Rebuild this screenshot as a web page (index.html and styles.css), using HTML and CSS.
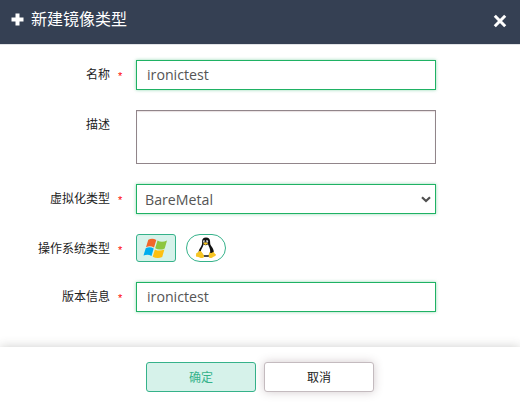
FILE: index.html
```
<!DOCTYPE html>
<html lang="zh-CN">
<head>
    <meta charset="UTF-8">
    <meta name="viewport" content="width=device-width, initial-scale=1.0">
    <title>新建镜像类型</title>
    <link rel="stylesheet" href="styles.css">
</head>
<body>
<div class="dialog">
    <div class="dialog-header">
        <svg class="icon-plus" width="13" height="13" viewBox="0 0 13 13"><path d="M4.5 0.5h4v4h4v4h-4v4h-4v-4h-4v-4h4z"/></svg>
        <h1>新建镜像类型</h1>
        <svg class="icon-close" width="14" height="14" viewBox="0 0 14 14"><path d="M1.800 1.800l10.400 10.400M12.200 1.800l-10.400 10.400"/></svg>
    </div>
    <form class="dialog-body">
        <div class="row">
            <label for="name">名称</label>
            <span class="required">*</span>
            <input id="name" class="field" type="text" value="ironictest">
        </div>
        <div class="row">
            <label for="desc">描述</label>
            <span class="required"></span>
            <textarea id="desc" class="field area"></textarea>
        </div>
        <div class="row">
            <label for="virt">虚拟化类型</label>
            <span class="required">*</span>
            <div class="select">
                <select id="virt" class="field">
                    <option>BareMetal</option>
                </select>
                <svg class="icon-arrow" width="10" height="7" viewBox="0 0 10 7"><path d="M1 1.200l4 3.800l4-3.800"/></svg>
            </div>
        </div>
        <div class="row os-row">
            <label>操作系统类型</label>
            <span class="required">*</span>
            <div class="os-list">
                <button type="button" class="os active" title="Windows">
                    <svg width="24" height="20" viewBox="0 0 24 20">
                        <path fill="#f1652a" d="M4.300 1.700C7 .2 9.500 .3 12.300 1.900L10 9.500C7.400 7.900 4.900 7.800 2 9.200z"/>
                        <path fill="#8cc63f" d="M13.500 2.600C16.300 4.200 19.500 4.200 23 2.600L20.700 10.400C17.500 12 14.300 12 11.200 10.300z"/>
                        <path fill="#00adef" d="M1.700 10.300C4.500 8.900 7.200 9 9.700 10.600L7.500 18C5 16.400 2.500 16.300 -.5 17.500z"/>
                        <path fill="#fdc010" d="M10.900 11.400C14 13 17 13 20.400 11.500L18.200 18.900C15.100 20.300 11.800 20.300 8.700 18.700z"/>
                    </svg>
                </button>
                <button type="button" class="os round" title="Linux">
                    <svg width="20" height="22" viewBox="0 0 20 22">
                        <path fill="#111" d="M10 .5C7.300 .5 6 2.300 6.100 4.600C6.200 7 6 8 4.800 9.900C3.400 12 1.900 14.500 2.900 17L7 19.800h6.500L17.600 16.800C18.400 14 17 11.300 15.400 9.300C14 7.500 14.200 6.500 14.100 4.500C14 2 12.700 .5 10 .5z"/>
                        <path fill="#fff" d="M7.600 7.300C9 8.500 10.400 8.400 12 7.300C12.700 9.500 14.600 12 14.200 15.300L12.600 18.300H7.500L4.700 15C4.700 12.500 7.200 10 7.600 7.300z"/>
                        <ellipse cx="8" cy="4.500" rx=".9" ry="1.200" fill="#fff"/>
                        <ellipse cx="11" cy="4.500" rx="1.100" ry="1.300" fill="#fff"/>
                        <circle cx="8.200" cy="4.700" r=".5"/>
                        <circle cx="10.800" cy="4.700" r=".5"/>
                        <path fill="#f6c524" d="M7.100 6.300L9.600 5.200l2.600 1.200L9.400 8z"/>
                        <path fill="#f6c524" d="M3.300 13.900C4.600 13.500 6 15.500 7.200 17.200C8.700 19 8.200 21 6.300 21.100C4.500 21.200 2.700 20 1 19.700C-.8 19.400 .2 18 .2 16.600C.4 15.200 2.600 15.700 3.300 13.900z"/>
                        <path fill="#f6c524" d="M13.300 15C14.300 16.500 16 16.300 17.200 14.700C18.500 15.300 18.200 16.500 19.900 17.600C20.600 18.700 17.900 19.200 16.400 20.500C15 21.500 13 21.300 12.700 19.700C12.400 18.500 13 17 13.300 15z"/>
                    </svg>
                </button>
            </div>
        </div>
        <div class="row">
            <label for="version">版本信息</label>
            <span class="required">*</span>
            <input id="version" class="field" type="text" value="ironictest">
        </div>
    </form>
    <div class="dialog-footer">
        <button type="button" class="btn confirm">确定</button>
        <button type="button" class="btn cancel">取消</button>
    </div>
</div>
</body>
</html>
```
FILE: styles.css
```
* {
    box-sizing: border-box;
}
body {
    margin: 0;
    background-color: #fff;
    color: #222;
    font-family: "Open Sans", "Noto Sans CJK SC", sans-serif;
    font-size: 12px;
    overflow: hidden;
}
.dialog {
    display: flex;
    flex-direction: column;
    height: 402px;
}
.dialog-header {
    display: flex;
    align-items: center;
    height: 44px;
    padding: 0 13px 5px 11px;
    background-color: #354053;
    box-shadow: 0 1px 0 #e1e3e6;
    color: #fff;
}
.dialog-header h1 {
    flex: 1;
    margin: 0 0 1px 7px;
    font-size: 16px;
    font-weight: 400;
    line-height: 24px;
}
.icon-plus {
    fill: #fff;
}
.icon-close {
    fill: none;
    stroke: #fff;
    stroke-width: 3;
    margin-top: 3px;
}
.dialog-body {
    flex: 1;
    display: flex;
    flex-direction: column;
    gap: 20px;
    padding-top: 16px;
}
.row {
    display: flex;
    align-items: flex-start;
}
.row label {
    width: 110px;
    text-align: right;
    line-height: 30px;
}
.required {
    width: 26px;
    padding: 2px 0 0 8px;
    color: #f00;
    font-family: "Liberation Sans", sans-serif;
    font-size: 11px;
    line-height: 28px;
}
.field {
    display: block;
    width: 300px;
    height: 30px;
    margin: 0;
    padding: 0 10px 2px;
    border: 1px solid #1fb264;
    border-radius: 0;
    background-color: #fff;
    box-shadow: 0 0 3px rgba(31, 178, 100, 0.5);
    color: #555;
    font-family: inherit;
    font-size: 14.2px;
    outline: none;
}
.area {
    height: 54px;
    border-color: #91858a;
    box-shadow: inset 0 1px 1px rgba(145, 100, 110, 0.2);
    resize: none;
}
.select {
    position: relative;
}
.select .field {
    padding: 0 8px;
    appearance: none;
}
.icon-arrow {
    position: absolute;
    top: 12px;
    right: 5px;
    fill: none;
    stroke: #505050;
    stroke-width: 2.2;
    pointer-events: none;
}
.os-row {
    height: 28px;
}
.os-list {
    display: flex;
    gap: 10px;
}
.os {
    display: flex;
    align-items: center;
    justify-content: center;
    width: 40px;
    height: 28px;
    padding: 0;
    border: 1px solid #35b28a;
    border-radius: 3px;
    background-color: #fff;
}
.os svg {
    overflow: visible;
}
.os.active {
    background-color: #d6f2ea;
}
.os.round {
    border-radius: 14px;
}
.dialog-footer {
    display: flex;
    justify-content: center;
    gap: 8px;
    height: 55px;
    padding-top: 15px;
    background-color: #fff;
    box-shadow: 0 0 10px rgba(60, 60, 50, 0.25);
}
.btn {
    width: 110px;
    height: 30px;
    padding: 0;
    border: 1px solid #c4bbbf;
    border-radius: 3px;
    background-color: #fff;
    color: #222;
    font-family: inherit;
    font-size: 12px;
}
.confirm {
    border-color: #35b28a;
    background-color: #d6f2ea;
    color: #35b28a;
}
.cancel {
    box-shadow: 0 0 10px rgba(80, 50, 60, 0.25);
}
```
